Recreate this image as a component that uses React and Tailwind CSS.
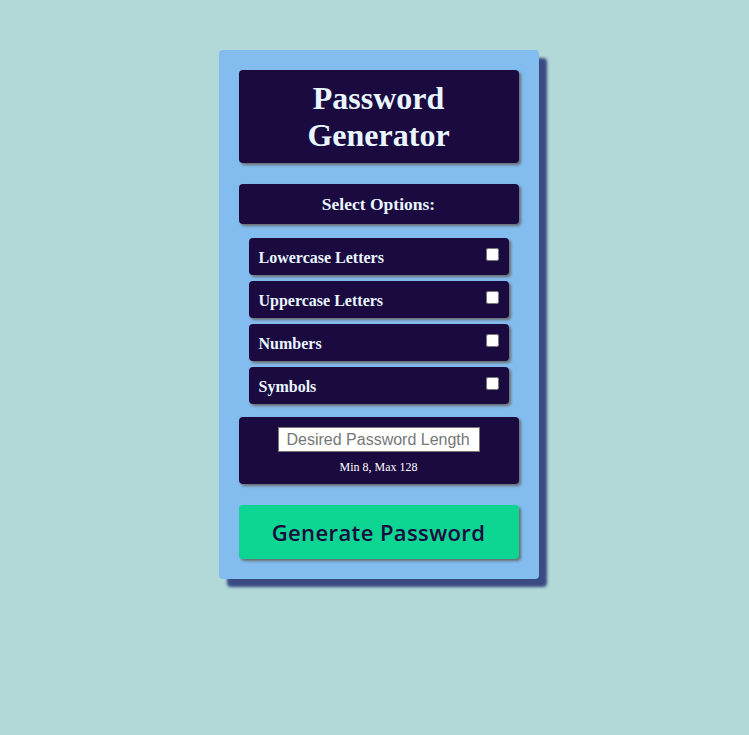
import React from 'react';

const options = ['Lowercase Letters', 'Uppercase Letters', 'Numbers', 'Symbols'];

export default function App() {
  return (
    <div className="min-h-[735px] w-full bg-[#b2d8d8] pt-[50px] pl-[8px] font-['Liberation_Serif',serif]">
      <div className="mx-auto w-[320px] rounded-[4px] bg-[#83bdf0] px-5 pt-5 pb-5 shadow-[8px_8px_3px_#3a4a82]">
        <div className="flex h-[93px] flex-col items-center justify-center rounded-[4px] bg-[#1b0a3f] text-[#e8f6ff] shadow-[2px_2px_3px_#6b6b6b]">
          <h1 className="text-center text-[32px] font-bold leading-[37px]">
            Password
            <br />
            Generator
          </h1>
        </div>

        <div className="mt-[21px] flex h-[40px] items-center justify-center rounded-[4px] bg-[#1b0a3f] text-[17.5px] font-bold text-[#e8f6ff] shadow-[2px_2px_3px_#6b6b6b]">
          Select Options:
        </div>

        <div className="mt-[14px] flex flex-col gap-[6px] px-[10px]">
          {options.map((o) => (
            <label
              key={o}
              className="flex h-[37px] items-center justify-between rounded-[4px] bg-[#1b0a3f] pl-[10px] pr-[10px] text-[16px] font-bold text-[#e8f6ff] shadow-[2px_2px_3px_#6b6b6b]"
            >
              <span className="pt-[2px]">{o}</span>
              <input type="checkbox" className="mb-[4px] h-[13px] w-[13px]" />
            </label>
          ))}
        </div>

        <div className="mt-[13px] flex h-[67px] flex-col items-center rounded-[4px] bg-[#1b0a3f] pt-[10px] shadow-[2px_2px_3px_#6b6b6b]">
          <input
            type="text"
            placeholder="Desired Password Length"
            className="h-[25px] w-[202px] border border-[#767676] bg-white px-[8px] font-['Liberation_Sans',sans-serif] text-[16px] text-black placeholder:text-[#777] outline-none"
          />
          <div className="mt-[6px] text-[12px] text-white">Min 8, Max 128</div>
        </div>

        <button className="mt-[21px] flex h-[54px] w-full items-center justify-center rounded-[4px] bg-[#0dd592] font-['Open_Sans',sans-serif] text-[22px] font-semibold tracking-[0.4px] text-[#1b0a3f] shadow-[2px_2px_3px_#6b6b6b]">
          Generate Password
        </button>
      </div>
    </div>
  );
}
